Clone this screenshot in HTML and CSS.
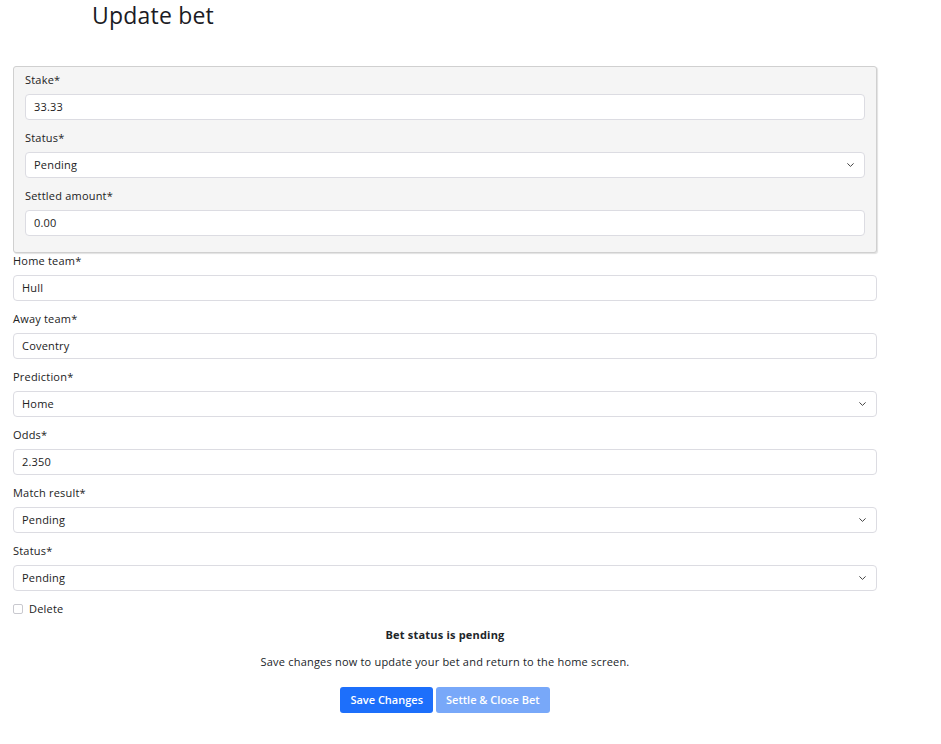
FILE: index.html
```html
<!DOCTYPE html>
<html lang="en">
<head>
<meta charset="utf-8">
<title>Update bet</title>
<link rel="stylesheet" href="styles.css">
</head>
<body>
<div class="page">
  <h1 class="title">Update bet</h1>
  <form class="form">
    <div class="panel">
      <div class="field">
        <label class="label">Stake*</label>
        <div class="input">33.33</div>
      </div>
      <div class="field">
        <label class="label">Status*</label>
        <div class="input select">Pending<svg class="chev" viewBox="0 0 7 4" width="7" height="4"><path d="M0.4 0.4 L3.5 3.4 L6.6 0.4" fill="none" stroke="#444" stroke-width="1"/></svg></div>
      </div>
      <div class="field">
        <label class="label">Settled amount*</label>
        <div class="input">0.00</div>
      </div>
    </div>
    <div class="field">
      <label class="label">Home team*</label>
      <div class="input">Hull</div>
    </div>
    <div class="field">
      <label class="label">Away team*</label>
      <div class="input">Coventry</div>
    </div>
    <div class="field">
      <label class="label">Prediction*</label>
      <div class="input select">Home<svg class="chev" viewBox="0 0 7 4" width="7" height="4"><path d="M0.4 0.4 L3.5 3.4 L6.6 0.4" fill="none" stroke="#444" stroke-width="1"/></svg></div>
    </div>
    <div class="field">
      <label class="label">Odds*</label>
      <div class="input">2.350</div>
    </div>
    <div class="field">
      <label class="label">Match result*</label>
      <div class="input select">Pending<svg class="chev" viewBox="0 0 7 4" width="7" height="4"><path d="M0.4 0.4 L3.5 3.4 L6.6 0.4" fill="none" stroke="#444" stroke-width="1"/></svg></div>
    </div>
    <div class="field">
      <label class="label">Status*</label>
      <div class="input select">Pending<svg class="chev" viewBox="0 0 7 4" width="7" height="4"><path d="M0.4 0.4 L3.5 3.4 L6.6 0.4" fill="none" stroke="#444" stroke-width="1"/></svg></div>
    </div>
    <div class="check">
      <span class="box"></span>
      <span class="check-label">Delete</span>
    </div>
    <p class="status">Bet status is pending</p>
    <p class="note">Save changes now to update your bet and return to the home screen.</p>
    <div class="actions">
      <button type="button" class="btn btn-primary">Save Changes</button>
      <button type="button" class="btn btn-light">Settle &amp; Close Bet</button>
    </div>
  </form>
</div>
</body>
</html>
```
FILE: styles.css
```css
* { box-sizing: border-box; }
body {
  margin: 0;
  font-family: "Open Sans", "DejaVu Sans", sans-serif;
  color: #212529;
  background: #fff;
  letter-spacing: 0.2px;
}
.page {
  padding: 0 64px 0 13px;
}
.title {
  margin: 0;
  padding: 0 0 0 79px;
  height: 66px;
  font-size: 23px;
  font-weight: 500;
  line-height: 30px;
  letter-spacing: 0.2px;
  color: #1b1b24;
}
.form {
  width: 864px;
}
.panel {
  background: #f5f5f5;
  border: 1px solid #d0d0d0;
  border-radius: 3px;
  box-shadow: 1px 1px 1px rgba(0,0,0,0.12);
  padding: 5px 11px 6px;
}
.field {
  margin-bottom: 10px;
}
.label {
  display: block;
  font-size: 11px;
  line-height: 15px;
  margin-bottom: 7px;
  color: #222;
}
.input {
  display: flex;
  align-items: center;
  justify-content: space-between;
  height: 26px;
  padding: 0 8px 2px;
  background: #fff;
  border: 1px solid #dcdce2;
  border-radius: 4px;
  font-size: 11px;
  color: #222;
}
.select { padding-right: 10px; }
.chev { display: block; margin-top: 2px; }
.check {
  display: flex;
  align-items: center;
  gap: 6px;
  margin-top: 0;
  height: 15px;
}
.box {
  width: 10px;
  height: 10px;
  border: 1px solid #c9c9cf;
  border-radius: 2px;
  background: #fff;
}
.check-label {
  font-size: 11px;
  color: #222;
}
.status {
  margin: 11px 0 0;
  text-align: center;
  font-size: 11px;
  font-weight: 700;
  line-height: 15px;
}
.note {
  margin: 12px 0 0;
  text-align: center;
  font-size: 11px;
  line-height: 15px;
}
.actions {
  display: flex;
  justify-content: center;
  gap: 3px;
  margin-top: 18px;
}
.btn {
  height: 26px;
  padding: 0 10px 1px;
  border: none;
  border-radius: 3px;
  font-family: inherit;
  font-size: 11px;
  font-weight: 600;
  letter-spacing: 0;
  color: #fff;
}
.btn-primary { background: #1d6ffb; }
.btn-light { background: #78a8f9; }
```
